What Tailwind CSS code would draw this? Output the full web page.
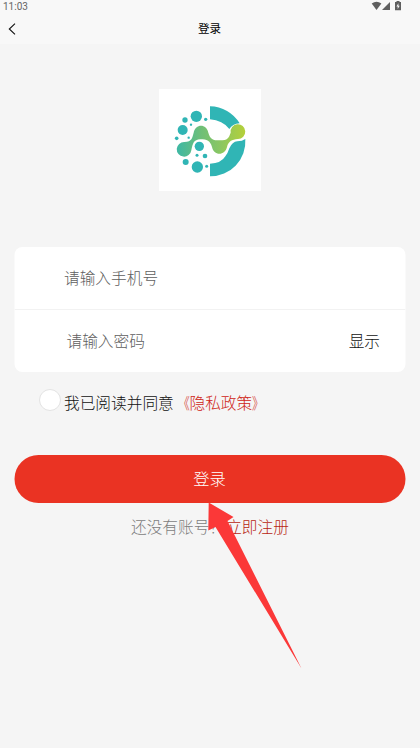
<!DOCTYPE html>
<html lang="zh-CN">
<head>
<meta charset="utf-8">
<meta name="viewport" content="width=device-width, initial-scale=1">
<title>登录</title>
<script src="https://cdn.jsdelivr.net/npm/@tailwindcss/browser@4"></script>
</head>
<body class="relative h-[748px] w-[420px] overflow-hidden bg-[#f5f5f5] font-['Noto_Sans_CJK_SC',sans-serif] text-[15.7px] font-light text-[#111]">
<header class="h-[44px] bg-[#f8f8f8]">
  <div class="flex h-[13px] items-center justify-between pr-[17px] pl-[3px]">
    <span class="font-[Roboto,sans-serif] text-[10px] leading-[13px] font-normal text-[#666]">11:03</span>
    <svg class="h-[13px] w-[32px]" viewBox="0 0 32 13" fill="#5f5f5f">
      <path d="M0.7 3.5Q5.5-.2 10.4 3.5L5.5 10Z"/>
      <path d="M19 2v8h-8Z"/>
      <path d="M24 2h1.5V1h3v1H30v8.2h-6Z"/>
      <path d="M27.4 3.2L25.4 6.5h1.3v2.6l2-3.4h-1.3Z" fill="#f8f8f8"/>
    </svg>
  </div>
  <div class="grid h-[31px] grid-cols-[1fr_auto_1fr] items-center">
    <svg class="ml-2 h-[12px] w-[8px]" viewBox="0 0 8 12" fill="none" stroke="#111" stroke-width="1.1"><path d="M7 .6 1.3 6 7 11.4"/></svg>
    <h1 class="-ml-px text-[11.5px] leading-[31px] font-normal text-black">登录</h1>
    <span></span>
  </div>
</header>
<main class="pt-[45px]">
  <svg class="mx-auto block h-[102px] w-[102px] bg-white" viewBox="27 27 306 306">
    <defs>
      <linearGradient id="wave" gradientUnits="userSpaceOnUse" x1="82" y1="0" x2="286" y2="0">
        <stop offset="0" stop-color="#3fb8a4"/><stop offset=".35" stop-color="#6fbf78"/><stop offset=".65" stop-color="#8cc760"/><stop offset="1" stop-color="#b5d039"/>
      </linearGradient>
    </defs>
    <path fill="#30b5b5" d="M180 79A105 105 0 0 1 269 130Q247 132 238 147Q218 121 180 118ZM286 177A105 105 0 0 1 180 289V251Q214 250 226 229Q233 221 238 205Q247 185 262 184Q277 184 286 177Z"/>
    <path fill="url(#wave)" d="M103 186C127 184 126 175 131 158C136 130 170 130 175 158C181 178 188 181 209 181C234 181 236 174 242 158A22 22 0 1 1 264 177C245 179 235 184 231 201C225 228 191 228 186 201C181 183 171 178 151 178C131 179 128 191 124 211A22 22 0 1 1 103 186Z"/>
    <g fill="#30b5b5">
      <circle cx="139" cy="109" r="17"/><circle cx="105" cy="120" r="8"/><circle cx="167" cy="118" r="5"/><circle cx="123" cy="134" r="3.5"/><circle cx="98" cy="150" r="15"/><circle cx="80" cy="175" r="5.5"/><circle cx="116" cy="173" r="3.5"/><circle cx="148" cy="199" r="14"/><circle cx="141" cy="226" r="4.5"/><circle cx="165" cy="228" r="7"/><circle cx="107" cy="246" r="9"/><circle cx="142" cy="261" r="17"/><circle cx="170" cy="259" r="4.5"/>
    </g>
  </svg>
  <section class="mx-auto mt-[56px] h-[125px] w-[391px] -translate-x-[0.5px] overflow-hidden rounded-[8px] bg-white">
    <div class="flex h-[63px] items-center border-b border-[#f2f2f2] pl-[50px] text-[#5e5e5e]">请输入手机号</div>
    <div class="flex h-[62px] items-center justify-between pr-[25px] pl-[52.5px]"><span class="text-[#5e5e5e]">请输入密码</span><span>显示</span></div>
  </section>
  <div class="flex pt-[17px] pl-[39px]">
    <span class="h-[22px] w-[22px] rounded-full border border-[#e3e3e3] bg-white"></span>
    <p class="ml-[3px] flex pt-[2px] leading-[24px] whitespace-nowrap">我已阅读并同意<span class="flex text-[#cf2414]"><span class="origin-right scale-x-75">《</span>隐私政策<span class="origin-left scale-x-75">》</span></span></p>
  </div>
  <button class="mx-auto mt-[40px] flex h-[48px] w-[391px] -translate-x-[0.5px] items-center justify-center rounded-full bg-[#ea3323] pb-[1px] text-[16.3px] text-white">登录</button>
  <p class="mt-[12px] flex pl-[131px] leading-[24px] whitespace-nowrap text-[#7d7d7d]">还没有账号？<span class="ml-[1px] text-[#b81f12]">立即注册</span></p>
</main>
<svg class="absolute top-[500px] left-[205px] h-[172px] w-[100px]" viewBox="205 500 100 172"><path fill="#fb3838" d="M208.7 502.5L233.500 517L227.500 521L301.500 668.500L215.500 527L208.300 530.500Z"/></svg>
</body>
</html>
